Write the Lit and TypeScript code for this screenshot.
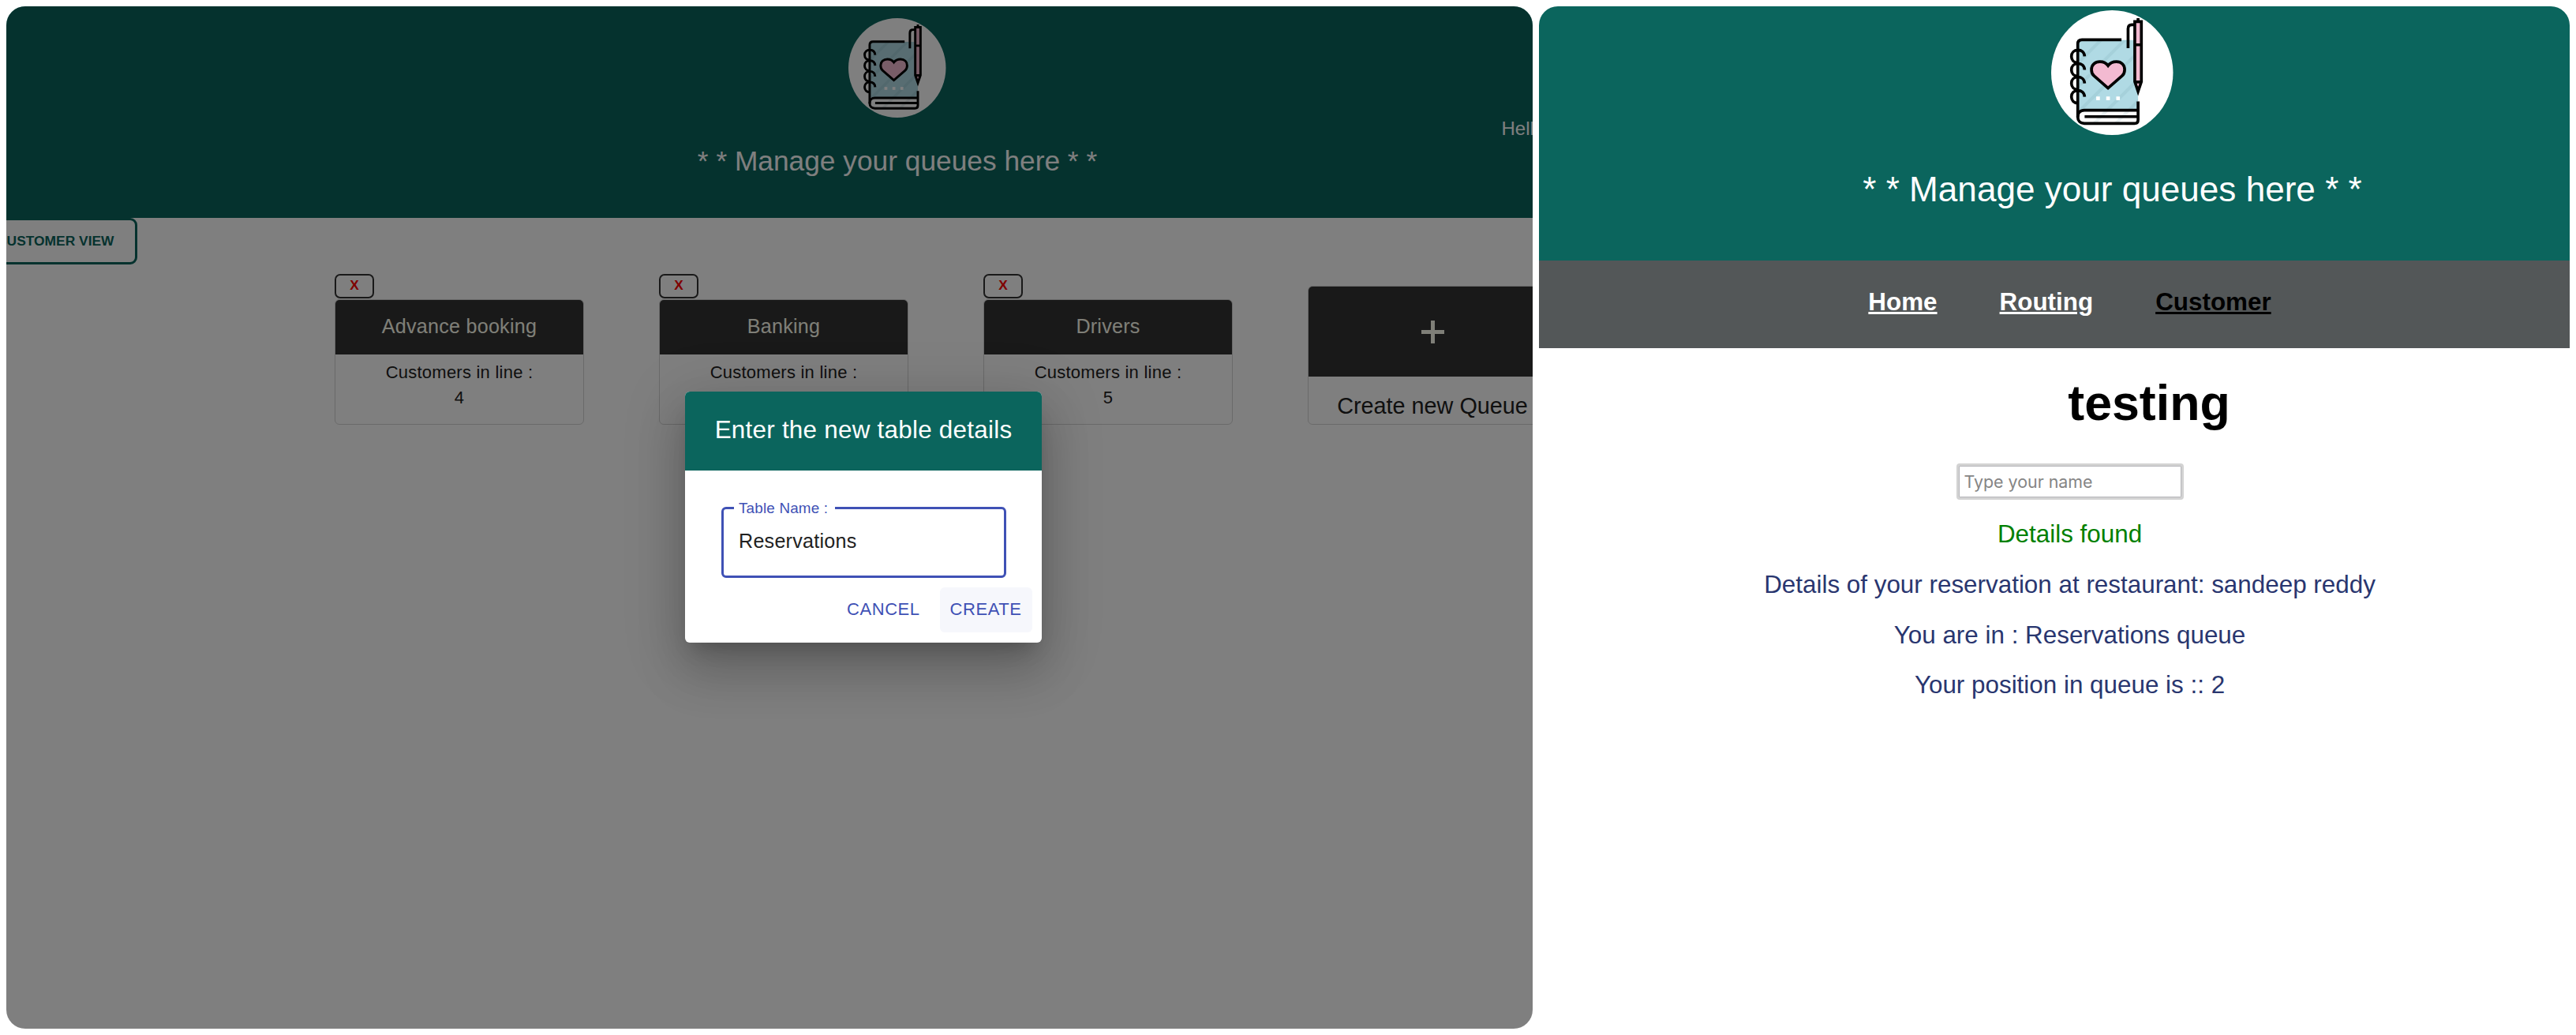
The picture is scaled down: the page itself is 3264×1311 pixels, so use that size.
import { LitElement, html, css, svg } from "lit";
import { customElement, property } from "lit/decorators.js";

const rings = [214, 265, 316, 367];

@customElement("notebook-logo")
class NotebookLogo extends LitElement {
  static styles = css`
    :host { display: block; }
    svg { display: block; width: 100%; height: 100%; }
  `;
  render() {
    return html`<svg viewBox="117 39 463 473" preserveAspectRatio="none" fill="none" stroke="#000" stroke-width="11">
      <defs><clipPath id="cover"><rect x="218" y="152" width="229" height="316" /></clipPath></defs>
      <ellipse cx="348.5" cy="275.5" rx="231.5" ry="236.5" fill="#fff" stroke="none" />
      <rect x="218" y="152" width="229" height="264" fill="#b0dae4" stroke="none" />
      <g clip-path="url(#cover)" stroke="#5f8f9d" stroke-opacity=".13" stroke-width="12">
        <path d="M210 248L320 138M210 338L410 138M210 435L460 185M270 478L460 288M352 478L460 370" />
      </g>
      <path d="M218 445V167Q218 151 234 151H384" />
      <path d="M447 385V454Q447 468 433 468H243C226 468 218 457 218 443C218 428 227 418 243 418H447M244 442.500H447" />
      ${rings.map(y => svg`<path d="M244 ${y}C243 ${y - 16} 232 ${y - 24} 218 ${y - 24}C204 ${y - 24} 194 ${y - 14} 194 ${y}C194 ${y + 14} 204 ${y + 24} 218 ${y + 24}" />`)}
      <path d="M333 334L280 288C270 279 270 271 270 264C270 246 284 234 302 234C318 234 328 242 333 249C338 242 349 234 365 234C384 234 396 247 396 264C396 273 394 281 386 288Z" fill="#f3bad1" />
      <g fill="#fff" stroke="none">
        <rect x="288" y="366" width="14" height="14" /><rect x="326" y="366" width="14" height="14" /><rect x="364" y="366" width="14" height="14" />
      </g>
      <path d="M409 183V109Q409 94 423 94H434" />
      <path d="M434.500 82H459.500V310L447 347L434.500 310Z" fill="#f3bad1" />
      <path d="M434 170H460M434 311H460M447 69V82" />
      <path d="M443 330H451L447 352Z" fill="#000" stroke-width="4" />
    </svg>`;
  }
}

@customElement("queue-card")
class QueueCard extends LitElement {
  @property() name = "";
  @property() count = "";
  static styles = css`
    :host { display: flex; flex-direction: column; align-items: flex-start; gap: 1.4px; }
    .remove { box-sizing: border-box; width: 50px; height: 30.6px; border: 2.5px solid #333; border-radius: 7px; color: #f00; font-size: 17.3px; font-weight: 700; line-height: 25px; text-align: center; }
    .card { box-sizing: border-box; width: 316px; height: 159px; border: 1px solid #d4d4d4; border-radius: 6px; overflow: hidden; text-align: center; }
    .title { height: 69px; line-height: 67px; background: #333; color: ivory; font-size: 25.14px; letter-spacing: .00938em; }
    .body { padding-top: 7.3px; font-size: 22px; line-height: 31.4px; letter-spacing: .01071em; color: #212121; }
  `;
  render() {
    return html`<div class="remove">X</div>
      <div class="card"><div class="title">${this.name}</div>
        <div class="body"><div>Customers in line :</div><div>${this.count}</div></div></div>`;
  }
}

@customElement("admin-view")
class AdminView extends LitElement {
  static styles = css`
    :host { display: block; position: relative; width: 1934px; height: 1295px; border-radius: 24px; overflow: hidden; background: #fff; }
    .header { position: relative; box-sizing: border-box; width: 2258px; height: 268px; padding-top: 15px; background: #0b655d; color: #fff; display: flex; flex-direction: column; align-items: center; }
    .logo { width: 123.5px; height: 126px; }
    .tagline { margin-top: 25px; font-size: 35.3px; line-height: 60px; white-space: nowrap; }
    .greeting { position: absolute; left: 1894.5px; top: 140px; font-size: 24px; line-height: 30px; }
    .toolbar { width: 166px; display: flex; justify-content: flex-end; }
    .switch { flex: none; box-sizing: border-box; height: 59px; padding: 0 26.5px; border: 3px solid #0b655d; border-radius: 9px; color: #0b655d; font-size: 17.4px; font-weight: 700; line-height: 52px; white-space: nowrap; }
    .queues { width: 1552px; margin: 12px 0 0 416px; display: grid; grid-template-columns: repeat(4, 316px); column-gap: 95px; align-items: end; }
    .create { box-sizing: border-box; height: 175.5px; border: 1px solid #d4d4d4; border-radius: 6px; overflow: hidden; text-align: center; color: #212121; font-size: 28.8px; line-height: 36px; white-space: nowrap; }
    .add { height: 114px; margin-bottom: 19px; background: #333; display: flex; align-items: center; justify-content: center; }
    .add svg { width: 29px; height: 29px; }
    .backdrop { position: absolute; inset: 0; background: rgba(0, 0, 0, .5); }
    .dialog { position: absolute; left: 860px; top: 488px; width: 452px; height: 318.3px; border-radius: 6px; overflow: hidden; background: #fff; }
    .shadow { position: absolute; left: 860px; top: 488px; width: 452px; height: 318.3px; border-radius: 6px; box-shadow: 0 17px 24px -11px rgba(0,0,0,.2), 0 38px 60px 5px rgba(0,0,0,.14), 0 14px 72px 13px rgba(0,0,0,.12); }
    .dialog-title { height: 100.3px; line-height: 97px; background: #0b655d; color: #fff; text-align: center; font-size: 31.43px; letter-spacing: .0075em; }
    .field { box-sizing: border-box; width: 361px; height: 98px; margin: 37.5px 0 0 46px; padding: 0 12px 6px; border: 3px solid #3f51b5; border-radius: 6px; min-width: 0; }
    .label { padding: 0 9px 0 6px; margin-left: 1px; color: #3f51b5; font-size: 18.86px; line-height: 20px; letter-spacing: .00938em; }
    .value { padding: 8px 0 0 7px; color: #212121; font-size: 25.14px; line-height: 46px; letter-spacing: .00938em; }
    .actions { display: flex; justify-content: flex-end; gap: 12.5px; padding: 12.3px 12.5px 0 0; }
    .action { height: 57px; padding: 0 13px 0 12.5px; border-radius: 6px; color: #3f51b5; font-size: 22px; line-height: 55.5px; letter-spacing: .025em; }
    .focused { background: #f6f7fc; }
  `;
  render() {
    return html`
      <div class="header">
        <notebook-logo class="logo"></notebook-logo>
        <div class="tagline">* * Manage your queues here * *</div>
        <div class="greeting">Hello</div>
      </div>
      <div class="toolbar"><div class="switch">CUSTOMER VIEW</div></div>
      <div class="queues">
        <queue-card name="Advance booking" count="4"></queue-card>
        <queue-card name="Banking" count="6"></queue-card>
        <queue-card name="Drivers" count="5"></queue-card>
        <div class="create">
          <div class="add"><svg viewBox="0 0 29 29"><path d="M14.500 0V29M0 14.500H29" stroke="ivory" stroke-width="5" /></svg></div>
          Create new Queue
        </div>
      </div>
      <div class="backdrop"></div>
      <div class="shadow"></div>
      <div class="dialog">
        <div class="dialog-title">Enter the new table details</div>
        <fieldset class="field"><legend class="label">Table Name :</legend><div class="value">Reservations</div></fieldset>
        <div class="actions"><div class="action">CANCEL</div><div class="action focused">CREATE</div></div>
      </div>`;
  }
}

@customElement("customer-view")
class CustomerView extends LitElement {
  static styles = css`
    :host { display: block; width: 1306px; height: 1295px; border-radius: 24px; overflow: hidden; background: #fff; }
    .header { box-sizing: border-box; width: 1453px; height: 322px; padding-top: 5px; background: #0b655d; color: #fff; display: flex; flex-direction: column; align-items: center; }
    .logo { width: 154.5px; height: 158px; }
    .tagline { margin-top: 39.4px; font-size: 44.1px; line-height: 60px; white-space: nowrap; }
    .nav, .content { width: 1345px; display: flex; }
    .nav { box-sizing: border-box; height: 111px; padding-bottom: 5px; background: #535758; justify-content: center; align-items: center; gap: 79px; font-size: 31.4px; font-weight: 700; }
    .link { color: #fff; text-decoration: underline; }
    .current { color: #000; }
    .content { flex-direction: column; align-items: center; color: #29366f; font-size: 31.4px; line-height: 63.8px; }
    .name { margin-top: 33px; padding-left: 201px; color: #000; font-size: 62.7px; font-weight: 700; line-height: 72px; }
    .input { box-sizing: border-box; width: 288px; height: 45.400px; margin: 41.300px 0 12.300px; border: 3px solid #d3d3d3; border-radius: 4px; box-shadow: inset 0 0 0 1px #b5b5b9; padding-left: 7px; color: #858585; font-family: Inter, sans-serif; font-size: 21.4px; line-height: 41px; }
    .found { color: #008000; }
  `;
  render() {
    return html`
      <div class="header">
        <notebook-logo class="logo"></notebook-logo>
        <div class="tagline">* * Manage your queues here * *</div>
      </div>
      <div class="nav"><a class="link">Home</a><a class="link">Routing</a><a class="link current">Customer</a></div>
      <div class="content">
        <div class="name">testing</div>
        <div class="input">Type your name</div>
        <div class="found">Details found</div>
        <div>Details of your reservation at restaurant: sandeep reddy</div>
        <div>You are in : Reservations queue</div>
        <div>Your position in queue is :: 2</div>
      </div>`;
  }
}

@customElement("app-root")
class AppRoot extends LitElement {
  static styles = css`
    :host { box-sizing: border-box; display: flex; gap: 8px; width: 3264px; height: 1311px; padding: 8px; overflow: hidden; background: #fff; font-family: "Liberation Sans", Arial, sans-serif; }
    .pane { flex: none; }
  `;
  render() {
    return html`<admin-view class="pane"></admin-view><customer-view class="pane"></customer-view>`;
  }
}
